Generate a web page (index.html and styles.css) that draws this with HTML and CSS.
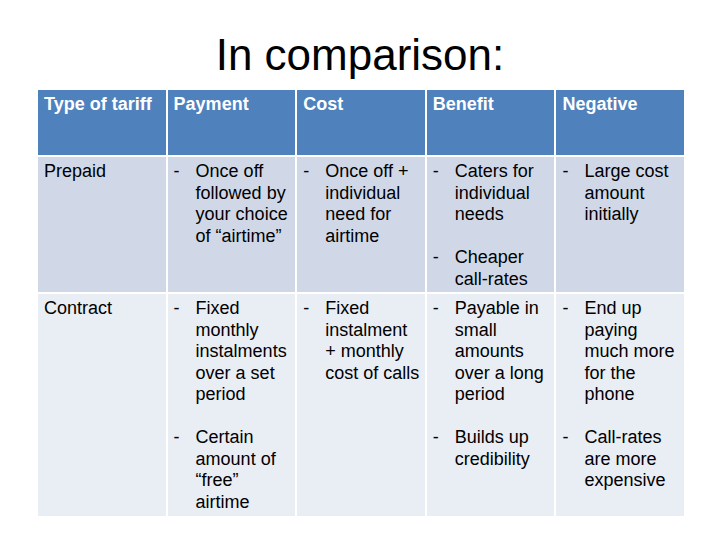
FILE: index.html
```html
<!DOCTYPE html>
<html>
<head>
<meta charset="utf-8">
<link rel="stylesheet" href="styles.css">
</head>
<body>
<div class="slide">
  <h1 class="title">In comparison:</h1>
  <div class="table">
    <div class="cell head">Type of tariff</div>
    <div class="cell head">Payment</div>
    <div class="cell head">Cost</div>
    <div class="cell head">Benefit</div>
    <div class="cell head">Negative</div>

    <div class="cell odd">Prepaid</div>
    <div class="cell odd"><ul class="list"><li>Once off followed by your choice of “airtime”</li></ul></div>
    <div class="cell odd"><ul class="list"><li>Once off + individual need for airtime</li></ul></div>
    <div class="cell odd"><ul class="list"><li>Caters for individual needs</li><li>Cheaper call-rates</li></ul></div>
    <div class="cell odd"><ul class="list"><li>Large cost amount initially</li></ul></div>

    <div class="cell even">Contract</div>
    <div class="cell even"><ul class="list"><li>Fixed monthly instalments over a set period</li><li>Certain amount of “free” airtime</li></ul></div>
    <div class="cell even"><ul class="list"><li>Fixed instalment + monthly cost of calls</li></ul></div>
    <div class="cell even"><ul class="list"><li>Payable in small amounts over a long period</li><li>Builds up credibility</li></ul></div>
    <div class="cell even"><ul class="list"><li>End up paying much more for the phone</li><li>Call-rates are more expensive</li></ul></div>
  </div>
</div>
</body>
</html>
```
FILE: styles.css
```css
html, body {
  margin: 0;
  padding: 0;
  background: #ffffff;
}
.slide {
  width: 720px;
  height: 540px;
  padding-top: 33px;
  box-sizing: border-box;
  font-family: "Liberation Sans", Arial, sans-serif;
  color: #000000;
}
.title {
  margin: 0;
  font-size: 44px;
  line-height: 44px;
  font-weight: normal;
  text-align: center;
}
.table {
  margin: 13px 0 0 38px;
  width: 646px;
  display: grid;
  grid-template-columns: repeat(5, 1fr);
  grid-template-rows: 65px 135px 222px;
  gap: 2px;
  background: #ffffff;
}
.cell {
  padding: 4px 4px 0 6px;
  font-size: 18px;
  line-height: 21.5px;
  overflow: hidden;
}
.head {
  background: #4f81bd;
  color: #ffffff;
  font-weight: bold;
}
.odd {
  background: #d0d8e8;
}
.even {
  background: #e9edf4;
}
.list {
  list-style: none;
  margin: 0;
  padding: 0 0 0 22px;
}
.list li {
  margin: 0;
}
.list li + li {
  margin-top: 21.5px;
}
.list li::before {
  content: "-";
  display: inline-block;
  width: 22px;
  margin-left: -22px;
}
```
